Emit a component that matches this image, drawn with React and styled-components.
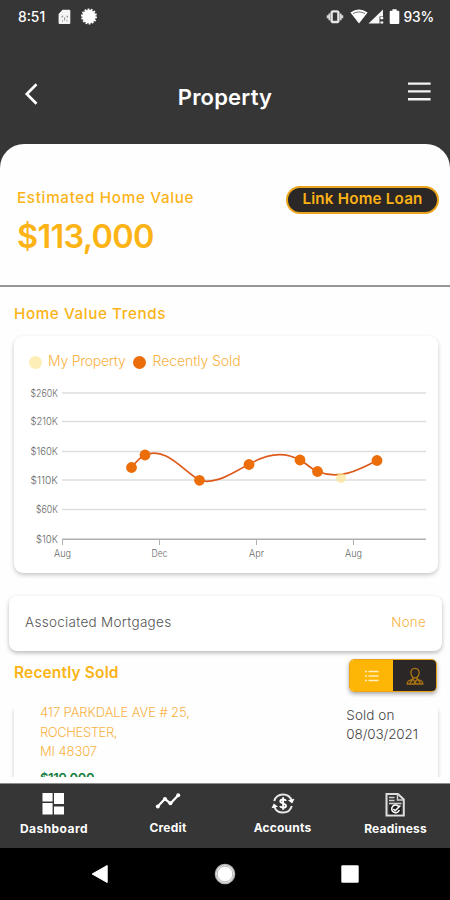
import React from "react";
import styled, { createGlobalStyle } from "styled-components";

const GlobalStyle = createGlobalStyle`
  * { box-sizing: border-box; }
  html, body { margin: 0; padding: 0; background: #fff; }
  body { font-family: Inter, "Open Sans", sans-serif; }
`;

const gold = "#fbb315";
const paleGold = "#f9b244";
const charcoal = "#363636";

const Screen = styled.div`
  width: 450px;
  height: 900px;
  display: flex;
  flex-direction: column;
  overflow: hidden;
  background: ${charcoal};
`;

const Label = styled.span`
  display: block;
  white-space: nowrap;
  font-size: ${(p) => p.$size}px;
  font-weight: ${(p) => p.$weight || 400};
  letter-spacing: ${(p) => p.$track || 0}px;
  line-height: ${(p) => p.$line || 20}px;
  color: ${(p) => p.$color || gold};
`;

const StatusBar = styled.div`
  height: 32px;
  flex: none;
  display: flex;
  justify-content: space-between;
  align-items: center;
  padding: 1px 16px 0 18px;
`;

const StatusGroup = styled.div`
  display: flex;
  align-items: center;
`;

const StatusIcon = styled.svg`
  display: block;
  flex: none;
  margin-left: ${(p) => p.$gap || 0}px;
  margin-right: ${(p) => p.$after || 0}px;
`;

const Header = styled.header`
  height: 112px;
  flex: none;
  display: grid;
  grid-template-columns: 60px 1fr 60px;
  padding: 0 15px 0 15px;
  align-items: start;
`;

const Title = styled.h1`
  margin: 50px 0 0;
  text-align: center;
  color: #fff;
  font-size: 22px;
  font-weight: 600;
  line-height: 30px;
  letter-spacing: 0.2px;
`;

const IconButton = styled.button`
  border: 0;
  padding: 0 ${(p) => p.$inset || 0}px 0 0;
  background: none;
  display: flex;
  margin-top: ${(p) => p.$top}px;
  justify-content: ${(p) => p.$align};
`;

const Sheet = styled.main`
  height: 640px;
  flex: none;
  display: flex;
  flex-direction: column;
  background: #fefefe;
  border-radius: 24px 24px 0 0;
  border-bottom: 1px solid #8c8c8c;
  overflow: hidden;
`;

const ValueSection = styled.section`
  height: 143px;
  flex: none;
  display: flex;
  justify-content: space-between;
  align-items: flex-start;
  padding: 42px 11px 0 17px;
  border-bottom: 2px solid #979797;
`;

const ValueBlock = styled.div`
  display: flex;
  flex-direction: column;
  gap: 8px;
  padding-top: 2px;
`;

const PillButton = styled.button`
  width: 153px;
  height: 28px;
  padding: 0 0 3px;
  display: flex;
  align-items: center;
  justify-content: center;
  border: 2px solid #e9a41b;
  border-radius: 14px;
  background: #2b2726;
  font-family: inherit;
`;

const SectionHeading = styled.div`
  flex: none;
  display: flex;
  justify-content: space-between;
  align-items: flex-start;
  padding: ${(p) => p.$pad};
  height: ${(p) => p.$height}px;
`;

const HeadingOffset = styled.div`
  padding-top: 1px;
`;

const ChartCard = styled.section`
  flex: none;
  margin: 0 12px 0 14px;
  height: 237px;
  padding-top: 14px;
  display: flex;
  flex-direction: column;
  border-radius: 9px;
  background: #fff;
  box-shadow: 0 2px 4px rgba(0, 0, 0, 0.22);
`;

const Legend = styled.div`
  display: flex;
  align-items: center;
  height: 22px;
  padding-left: 15px;
`;

const LegendDot = styled.span`
  width: 13px;
  height: 13px;
  margin: ${(p) => p.$margin};
  border-radius: 50%;
  background: ${(p) => p.$color};
`;

const Chart = styled.svg`
  display: block;
  font-family: Inter, sans-serif;
`;

const MortgageCard = styled.section`
  flex: none;
  height: 55px;
  margin: 23px 8px 0 9px;
  padding: 0 16px 3px 16px;
  display: flex;
  justify-content: space-between;
  align-items: center;
  border-radius: 8px;
  background: #fff;
  box-shadow: 0 2px 4px rgba(0, 0, 0, 0.27);
`;

const Toggle = styled.div`
  width: 88px;
  height: 33px;
  display: grid;
  grid-template-columns: 1fr 1fr;
  border: 1px solid #e9a41b;
  border-radius: 5px;
  overflow: hidden;
  box-shadow: 0 2px 4px rgba(0, 0, 0, 0.35);
`;

const ToggleSide = styled.button`
  border: 0;
  padding: 0;
  display: flex;
  align-items: center;
  justify-content: center;
  background: ${(p) => (p.$active ? "#fdb506" : "#2b2726")};
`;

const ListViewport = styled.div`
  height: 75px;
  flex: none;
  overflow: hidden;
  padding: 0 12px 0 14px;
`;

const SoldCard = styled.article`
  height: 130px;
  padding: 0 20px 0 26px;
  display: flex;
  justify-content: space-between;
  background: #fefefe;
  box-shadow: 0 8px 4px rgba(0, 0, 0, 0.2);
`;

const SoldColumn = styled.div`
  display: flex;
  flex-direction: column;
  padding-top: ${(p) => p.$top || 0}px;
`;

const TabBar = styled.nav`
  height: 64px;
  flex: none;
  display: grid;
  grid-template-columns: 108px 120px 109px 117px;
  background: ${charcoal};
  width: 454px;
`;

const Tab = styled.a`
  display: flex;
  flex-direction: column;
  align-items: center;
  padding-top: ${(p) => p.$top}px;
`;

const TabIcon = styled.svg`
  display: block;
  width: 26px;
  height: 26px;
`;

const SystemNav = styled.div`
  height: 52px;
  flex: none;
  background: #000;
  display: flex;
  align-items: center;
  justify-content: space-between;
  padding: 0 91px;
`;

const grid = [
  ["$260K", 393],
  ["$210K", 421.5],
  ["$160K", 451.5],
  ["$110K", 480],
  ["$60K", 509.5],
];
const ticks = [
  ["Aug", 62.5, 17],
  ["Dec", 159.5, 16],
  ["Apr", 256.5, 15],
  ["Aug", 353.5, 17],
];
const sold = [
  [131.5, 467.5],
  [145, 455],
  [199.5, 480.3],
  [249, 464.5],
  [300, 460],
  [317.5, 471.5],
  [377, 460.5],
];

function TrendChart() {
  return (
    <Chart width="424" height="196" viewBox="14 372 424 196">
      {grid.map(([t, y]) => (
        <g key={t}>
          <line x1="62" x2="426" y1={y} y2={y} stroke="#dedede" strokeWidth="1.3" />
          <text x={t.length > 4 ? 30.5 : 36} y={y + 3.9} fontSize="10" fontWeight="300" fill="#686868"
            textLength={t.length > 4 ? 27.5 : 22} lengthAdjust="spacingAndGlyphs">{t}</text>
        </g>
      ))}
      <text x="36" y="543.2" fontSize="10" fontWeight="300" fill="#686868" textLength="22" lengthAdjust="spacingAndGlyphs">$10K</text>
      <path d="M62 539.3H426" stroke="#b0b0b0" strokeWidth="1.4" />
      {ticks.map(([t, x, w], i) => (
        <g key={i}>
          <line x1={x} x2={x} y1="539" y2="545" stroke="#b0b0b0" />
          <text x={x - w / 2} y="557" fontSize="10" fontWeight="300" fill="#686868" textLength={w} lengthAdjust="spacingAndGlyphs">{t}</text>
        </g>
      ))}
      <path d="M131.5 467.5C136 462 140 457 145 455C166 446 183 471 199.5 480.3C217 485 233 472 249 464.5C266 454 284 451 300 460C306 463 311 469 317.5 471.5C339 480 357 471 377 460.5"
        fill="none" stroke="#dd5a1c" strokeWidth="1.7" />
      {sold.map(([x, y]) => <circle key={x} cx={x} cy={y} r="5.4" fill="#eb6e0b" />)}
      <circle cx="341" cy="478" r="5" fill="#fbe59a" fillOpacity="0.75" />
    </Chart>
  );
}

export default function App() {
  return (
    <>
      <GlobalStyle />
      <Screen>
        <StatusBar>
          <StatusGroup>
            <Label $size={13.8} $weight={500} $color="#fff" $track={0}>8:51</Label>
            <StatusIcon $gap={13} width="13" height="16" viewBox="0 0 13 16">
              <path d="M4.5 .8H11.3Q12.3 .8 12.3 1.8V14Q12.3 15 11.3 15H1.6Q.6 15 .6 14V5Z" fill="#f4f4f4" />
              <path d="M4 7.2H5.2M4 7.2V8.6M9.5 7.2H8.4M9.5 7.2V8.6M4 11.8H5M9.5 11.8H8.4M6.7 8.4V11.4" fill="none" stroke="#888" strokeWidth="1" />
            </StatusIcon>
            <StatusIcon $gap={9} width="18" height="18" viewBox="0 0 18 18">
              <circle cx="9" cy="8.5" r="6.7" fill="#fff" />
              <circle cx="9" cy="8.5" r="7.1" fill="none" stroke="#fff" strokeWidth="1.8" strokeDasharray="1.9 1.28" />
            </StatusIcon>
          </StatusGroup>
          <StatusGroup>
            <StatusIcon width="18" height="16" viewBox="0 0 18 16">
              <rect x="5.6" y="2.4" width="6.8" height="10.6" rx="1.6" fill="none" stroke="#e6e6e6" strokeWidth="2.4" />
              <path d="M3.3 4.4V11.2M14.7 4.4V11.2M1.6 6.3V9.2M16.4 6.3V9.2" stroke="#d8d8d8" strokeWidth="1.7" />
            </StatusIcon>
            <StatusIcon $gap={6} width="18" height="16" viewBox="0 0 18 16">
              <path d="M.4 3.6Q9-2.4 17.6 3.6L9 14.4Z" fill="#fff" />
              <path d="M3 4.6Q9 1.2 15 4.6" fill="none" stroke="#777" strokeWidth="1" />
            </StatusIcon>
            <StatusIcon width="16" height="16" viewBox="0 0 16 16">
              <path d="M15 .6V7.4H11.5V14.6H.5Z" fill="#f5f5f5" />
              <path d="M12.4 9.2H15.2M12.4 13.5H15.2" stroke="#fff" strokeWidth="2.2" />
            </StatusIcon>
            <StatusIcon $gap={5} $after={3} width="11" height="16" viewBox="0 0 11 16">
              <path d="M3.4 .2H7.6V1.8H9.2Q10.3 1.8 10.3 2.8V14Q10.3 15 9.2 15H1.8Q.7 15 .7 14V2.8Q.7 1.8 1.8 1.8H3.4Z" fill="#fff" />
            </StatusIcon>
            <Label $size={13.8} $weight={500} $color="#fff" $track={-0.15}>93%</Label>
          </StatusGroup>
        </StatusBar>

        <Header>
          <IconButton $top={50} $align="flex-start" aria-label="Back">
            <svg width="30" height="24" viewBox="0 0 30 24">
              <path d="M21.5 2.2L11.8 12L21.5 21.8" fill="none" stroke="#fff" strokeWidth="2.7" />
            </svg>
          </IconButton>
          <Title>Property</Title>
          <IconButton $top={48} $inset={4} $align="flex-end" aria-label="Menu">
            <svg width="24" height="24" viewBox="0 0 24 24">
              <path d="M1 3.6H23.6M1 11.4H23.6M1 19.2H23.6" stroke="#f2f2f2" strokeWidth="2.4" />
            </svg>
          </IconButton>
        </Header>

        <Sheet>
          <ValueSection>
            <ValueBlock>
              <Label $size={15.2} $weight={500} $track={0.7}>Estimated Home Value</Label>
              <Label $size={32.5} $weight={600} $track={-0.7} $line={42}>$113,000</Label>
            </ValueBlock>
            <PillButton>
              <Label $size={15.2} $weight={600} $track={0.2}>Link Home Loan</Label>
            </PillButton>
          </ValueSection>

          <SectionHeading $height={49} $pad="17px 12px 0 14px">
            <Label $size={15.2} $weight={500} $track={0.6}>Home Value Trends</Label>
          </SectionHeading>

          <ChartCard>
            <Legend>
              <LegendDot $color="#fdeeb5" $margin="2px 6px 0 0" />
              <Label $size={14} $weight={300} $track={-0.25} $color={paleGold}>My Property</Label>
              <LegendDot $color="#eb6e0b" $margin="2px 7px 0 7px" />
              <Label $size={14} $weight={300} $track={-0.08} $color={paleGold}>Recently Sold</Label>
            </Legend>
            <TrendChart />
          </ChartCard>

          <MortgageCard>
            <Label $size={13.5} $weight={300} $track={0.3} $color="#555">Associated Mortgages</Label>
            <Label $size={13.3} $weight={300} $track={0.3} $color={paleGold}>None</Label>
          </MortgageCard>

          <SectionHeading $height={51} $pad="8px 13px 0 14px">
            <HeadingOffset>
              <Label $size={15.5} $weight={600} $track={0.15} $line={26}>Recently Sold</Label>
            </HeadingOffset>
            <Toggle>
              <ToggleSide $active aria-label="List view">
                <svg width="16" height="14" viewBox="0 0 16 14">
                  <path d="M1 2.5H3M4.5 2.5H14.5M1 7H3M4.5 7H14.5M1 11.5H3M4.5 11.5H14.5" stroke="#fff0bd" strokeWidth="1.6" />
                </svg>
              </ToggleSide>
              <ToggleSide aria-label="Agent view">
                <svg width="18" height="20" viewBox="0 0 18 20">
                  <path d="M5.2 8.5C2.6 .2 15.4 .2 12.8 8.5C12 11.4 10.8 12 9 12S6 11.4 5.2 8.5ZM6.8 11.6V13L2.4 15Q1.2 15.8 1.2 18H16.8Q16.8 15.8 15.6 15L11.2 13V11.6M4 17L7 13.2L10.2 17.4M8 17L11.4 13.2L14.4 17" fill="none" stroke="#aa7412" strokeWidth="1.3" />
                </svg>
              </ToggleSide>
            </Toggle>
          </SectionHeading>

          <ListViewport>
            <SoldCard>
              <SoldColumn>
                <Label $size={13} $weight={300} $track={-0.1} $color={paleGold}>417 PARKDALE AVE # 25,</Label>
                <Label $size={13} $weight={300} $track={-0.4} $line={21} $color={paleGold}>ROCHESTER,</Label>
                <Label $size={13} $weight={300} $track={-0.1} $line={17} $color={paleGold}>MI 48307</Label>
                <Label $size={13} $weight={600} $track={-0.35} $line={36} $color="#17803f">$119,000</Label>
              </SoldColumn>
              <SoldColumn $top={4}>
                <Label $size={13.5} $weight={300} $track={0.1} $line={19} $color="#444">Sold on</Label>
                <Label $size={13.5} $weight={300} $track={-0.1} $line={19} $color="#444">08/03/2021</Label>
              </SoldColumn>
            </SoldCard>
          </ListViewport>
        </Sheet>

        <TabBar>
          <Tab $top={7}>
            <TabIcon viewBox="0 0 26 26">
              <path d="M1.5 2H11.6V10.5H1.5ZM13 2H23V13H13ZM1.5 12H11.6V23.5H1.5ZM13 15.5H23V23.5H13Z" fill="#fff" />
            </TabIcon>
            <Label $size={12} $weight={700} $color="#fff" $track={0.45} $line={24}>Dashboard</Label>
          </Tab>
          <Tab $top={6}>
            <TabIcon viewBox="0 0 26 26">
              <path d="M2.5 16.8L10 8.8L15.4 13.5L23.5 5" fill="none" stroke="#fff" strokeWidth="2.3" />
              <circle cx="2.8" cy="16.5" r="2" fill="#fff" /><circle cx="10" cy="9" r="2" fill="#fff" />
              <circle cx="15.4" cy="13.2" r="2" fill="#fff" /><circle cx="23.2" cy="5.3" r="2" fill="#fff" />
            </TabIcon>
            <Label $size={12} $weight={700} $color="#fff" $track={0.2} $line={24}>Credit</Label>
          </Tab>
          <Tab $top={6}>
            <TabIcon viewBox="0 0 26 26">
              <path d="M4.2 11A9.2 9.2 0 0 1 21.8 10.8M21.8 16A9.2 9.2 0 0 1 4.2 16.2" fill="none" stroke="#e8e8e8" strokeWidth="2" />
              <path d="M24.5 8.7L22.2 13.5L18 10.3ZM1.5 18.3L3.8 13.5L8 16.7Z" fill="#fff" />
              <path d="M16 10.8C15.4 9.3 10.5 8.7 10.3 11.3C10.3 13.8 16 12.8 16 15.8C15.8 18.3 10.8 17.9 10 16.1M13.1 7.2V19.8" fill="none" stroke="#fff" strokeWidth="1.9" />
            </TabIcon>
            <Label $size={12} $weight={700} $color="#fff" $track={0.2} $line={24}>Accounts</Label>
          </Tab>
          <Tab $top={7}>
            <TabIcon viewBox="0 0 26 26">
              <path d="M3.5 3H15L20.8 8.5V24.5H3.5Z" fill="none" stroke="#dedede" strokeWidth="2" />
              <path d="M14.5 3V9H20.5M6 6.5H11.5M6 9.5H11.5M6 12.5H18.5" fill="none" stroke="#cfcfcf" strokeWidth="1.5" />
              <rect x="6.6" y="14" width="11.5" height="9.2" fill="#1d1d1d" />
              <path d="M15.8 15.6A3.9 3.9 0 1 0 16.3 19M10.3 18L12.2 19.7L17.4 14.5" fill="none" stroke="#fff" strokeWidth="1.5" />
            </TabIcon>
            <Label $size={12} $weight={700} $color="#fff" $track={0.2} $line={24}>Readiness</Label>
          </Tab>
        </TabBar>

        <SystemNav>
          <svg width="17" height="20" viewBox="0 0 17 20"><path d="M1.2 10L16.2 1.5V18.5Z" fill="#fff" stroke="#fff" strokeLinejoin="round" /></svg>
          <svg width="22" height="22" viewBox="0 0 22 22">
            <circle cx="11" cy="11" r="9.5" fill="#fff" stroke="#b8b8b8" strokeWidth="1.6" />
            <circle cx="11" cy="11" r="7.8" fill="none" stroke="#999" strokeWidth=".7" />
          </svg>
          <svg width="18" height="18" viewBox="0 0 18 18"><rect x=".3" y=".3" width="17.4" height="17.4" rx="1.2" fill="#fff" /></svg>
        </SystemNav>
      </Screen>
    </>
  );
}
